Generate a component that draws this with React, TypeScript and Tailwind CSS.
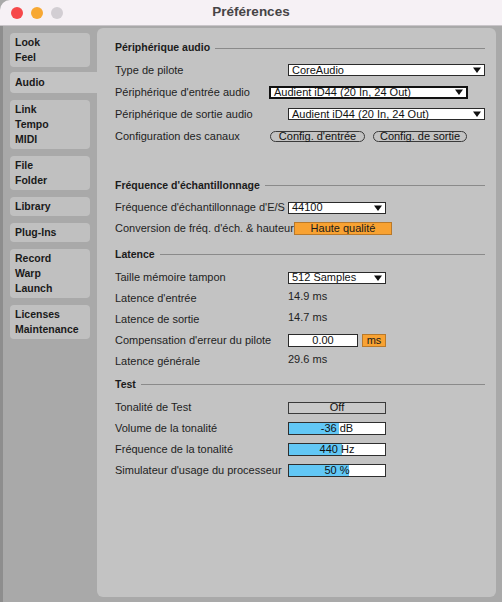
import React from 'react';

const tabGroups: string[][] = [
  ['Look', 'Feel'],
  ['Audio'],
  ['Link', 'Tempo', 'MIDI'],
  ['File', 'Folder'],
  ['Library'],
  ['Plug-Ins'],
  ['Record', 'Warp', 'Launch'],
  ['Licenses', 'Maintenance'],
];

function Arrow() {
  return (
    <svg width="8" height="6" viewBox="0 0 8 6" className="shrink-0">
      <path d="M0 0.5h8L4 6z" fill="#111" />
    </svg>
  );
}

function Dropdown({ value, className }: { value: string; className: string }) {
  return (
    <div className={`flex items-center justify-between bg-white pl-[3px] pr-[3px] text-[11px] leading-none text-[#111] ${className}`}>
      <span>{value}</span>
      <Arrow />
    </div>
  );
}

function Header({ title, className }: { title: string; className: string }) {
  return (
    <div className={`flex items-center ${className}`}>
      <span className="text-[10.5px] font-bold text-[#1b1b1b]">{title}</span>
      <div className="ml-[5px] h-px flex-1 bg-[#8a8a8a]" />
    </div>
  );
}

function Row({
  label,
  labelW,
  h,
  children,
}: {
  label: string;
  labelW: string;
  h: string;
  children?: React.ReactNode;
}) {
  return (
    <div className={`flex items-center ${h}`}>
      <span className={`shrink-0 text-[11px] text-[#1e1e1e] ${labelW}`}>{label}</span>
      {children}
    </div>
  );
}

function Meter({ value, fill }: { value: string; fill: number }) {
  return (
    <div className="grid h-[13px] w-[98px] border border-[#2e2e2e] bg-white">
      <div className="col-start-1 row-start-1 h-full bg-[#62c7f5]" style={{ width: `${fill}px` }} />
      <div className="col-start-1 row-start-1 flex items-center justify-center text-[11px] leading-none text-[#111]">
        {value}
      </div>
    </div>
  );
}

export default function App() {
  return (
    <div className="flex h-[602px] w-[502px] flex-col overflow-hidden bg-[#a9a9a9] font-['Liberation_Sans',Arial,sans-serif]">
      {/* barre de titre */}
      <div className="grid h-[26px] shrink-0 grid-cols-[1fr_auto_1fr] items-center rounded-tl-[10px] border-b border-[#c9c5c9] bg-[#f6f1f5]">
        <div className="flex items-center gap-[8px] pl-[11px]">
          <div className="h-[12px] w-[12px] rounded-full bg-[#f6484a]" />
          <div className="h-[12px] w-[12px] rounded-full bg-[#f7a833]" />
          <div className="h-[12px] w-[12px] rounded-full bg-[#d2ced3]" />
        </div>
        <div className="text-[13.5px] font-bold text-[#464446]">Préférences</div>
        <div />
      </div>

      <div className="flex flex-1 border-l-[3px] border-[#8e8e8e]">
        {/* onglets */}
        <div className="ml-[7px] mt-[7px] flex w-[80px] shrink-0 flex-col gap-[7px]">
          {tabGroups.map((g) =>
            g[0] === 'Audio' ? (
              <div
                key="audio"
                className="-mt-[2px] mr-[-7px] rounded-l-[4px] bg-[#c3c3c3] py-[3px] pl-[5px] text-[10.5px] font-bold leading-[15px] text-[#1a1a1a]"
              >
                Audio
              </div>
            ) : (
              <div
                key={g[0]}
                className="rounded-[4px] bg-[#c0c0c0] py-[2px] pl-[5px] text-[10.5px] font-bold leading-[15px] text-[#1a1a1a]"
              >
                {g.map((t) => (
                  <div key={t}>{t}</div>
                ))}
              </div>
            )
          )}
        </div>

        {/* panneau */}
        <div className="mb-[5px] ml-[7px] mt-[2px] flex w-[399px] flex-col rounded-[6px] bg-[#c3c3c3] pl-[18px] pr-[11px] pt-[9px]">
          <Header title="Périphérique audio" className="h-[22px]" />
          <Row label="Type de pilote" labelW="w-[173px]" h="h-[22px]">
            <Dropdown value="CoreAudio" className="h-[12px] w-[197px] border border-[#2a2a2a]" />
          </Row>
          <Row label="Périphérique d'entrée audio" labelW="w-[154px]" h="h-[22px]">
            <Dropdown value="Audient iD44 (20 In, 24 Out)" className="h-[13px] w-[199px] border-2 border-[#111]" />
          </Row>
          <Row label="Périphérique de sortie audio" labelW="w-[173px]" h="h-[22px]">
            <Dropdown value="Audient iD44 (20 In, 24 Out)" className="h-[12px] w-[197px] border border-[#2a2a2a]" />
          </Row>
          <Row label="Configuration des canaux" labelW="w-[155px]" h="h-[22px]">
            <div className="flex h-[11px] w-[95px] items-center justify-center rounded-full border border-[#3a3a3a] text-[11px] leading-none text-[#111]">
              Config. d'entrée
            </div>
            <div className="ml-[8px] flex h-[11px] w-[94px] items-center justify-center rounded-full border border-[#3a3a3a] text-[11px] leading-none text-[#111]">
              Config. de sortie
            </div>
          </Row>

          <Header title="Fréquence d'échantillonnage" className="mt-[27px] h-[23px]" />
          <Row label="Fréquence d'échantillonnage d'E/S" labelW="w-[173px]" h="h-[21px]">
            <Dropdown value="44100" className="h-[12px] w-[98px] border border-[#2a2a2a]" />
          </Row>
          <Row label="Conversion de fréq. d'éch. & hauteur" labelW="w-[179px]" h="h-[21px]">
            <div className="flex h-[13px] w-[98px] items-center justify-center border border-[#b9792a] bg-[#f8a232] text-[11px] leading-none text-[#1a1a1a]">
              Haute qualité
            </div>
          </Row>

          <Header title="Latence" className="mt-[3px] h-[25px]" />
          <Row label="Taille mémoire tampon" labelW="w-[173px]" h="h-[21px]">
            <Dropdown value="512 Samples" className="h-[12px] w-[98px] border border-[#2a2a2a]" />
          </Row>
          <Row label="Latence d'entrée" labelW="w-[173px]" h="h-[21px]">
            <span className="mb-[4px] text-[11px] text-[#1e1e1e]">14.9 ms</span>
          </Row>
          <Row label="Latence de sortie" labelW="w-[173px]" h="h-[21px]">
            <span className="mb-[4px] text-[11px] text-[#1e1e1e]">14.7 ms</span>
          </Row>
          <Row label="Compensation d'erreur du pilote" labelW="w-[173px]" h="h-[21px]">
            <div className="flex h-[13px] w-[70px] items-center justify-center border border-[#2a2a2a] bg-white text-[11px] leading-none text-[#111]">
              0.00
            </div>
            <div className="ml-[4px] flex h-[13px] w-[24px] items-center justify-center border border-[#b9792a] bg-[#f8a232] text-[11px] leading-none text-[#1a1a1a]">
              ms
            </div>
          </Row>
          <Row label="Latence générale" labelW="w-[173px]" h="h-[21px]">
            <span className="mb-[4px] text-[11px] text-[#1e1e1e]">29.6 ms</span>
          </Row>

          <Header title="Test" className="h-[25px]" />
          <Row label="Tonalité de Test" labelW="w-[173px]" h="h-[21px]">
            <div className="flex h-[12px] w-[98px] items-center justify-center border border-[#3a3a3a] bg-[#c9c9c9] text-[11px] leading-none text-[#111]">
              Off
            </div>
          </Row>
          <Row label="Volume de la tonalité" labelW="w-[173px]" h="h-[21px]">
            <Meter value="-36 dB" fill={50} />
          </Row>
          <Row label="Fréquence de la tonalité" labelW="w-[173px]" h="h-[21px]">
            <Meter value="440 Hz" fill={53} />
          </Row>
          <Row label="Simulateur d'usage du processeur" labelW="w-[173px]" h="h-[21px]">
            <Meter value="50 %" fill={60} />
          </Row>
        </div>
      </div>
    </div>
  );
}
